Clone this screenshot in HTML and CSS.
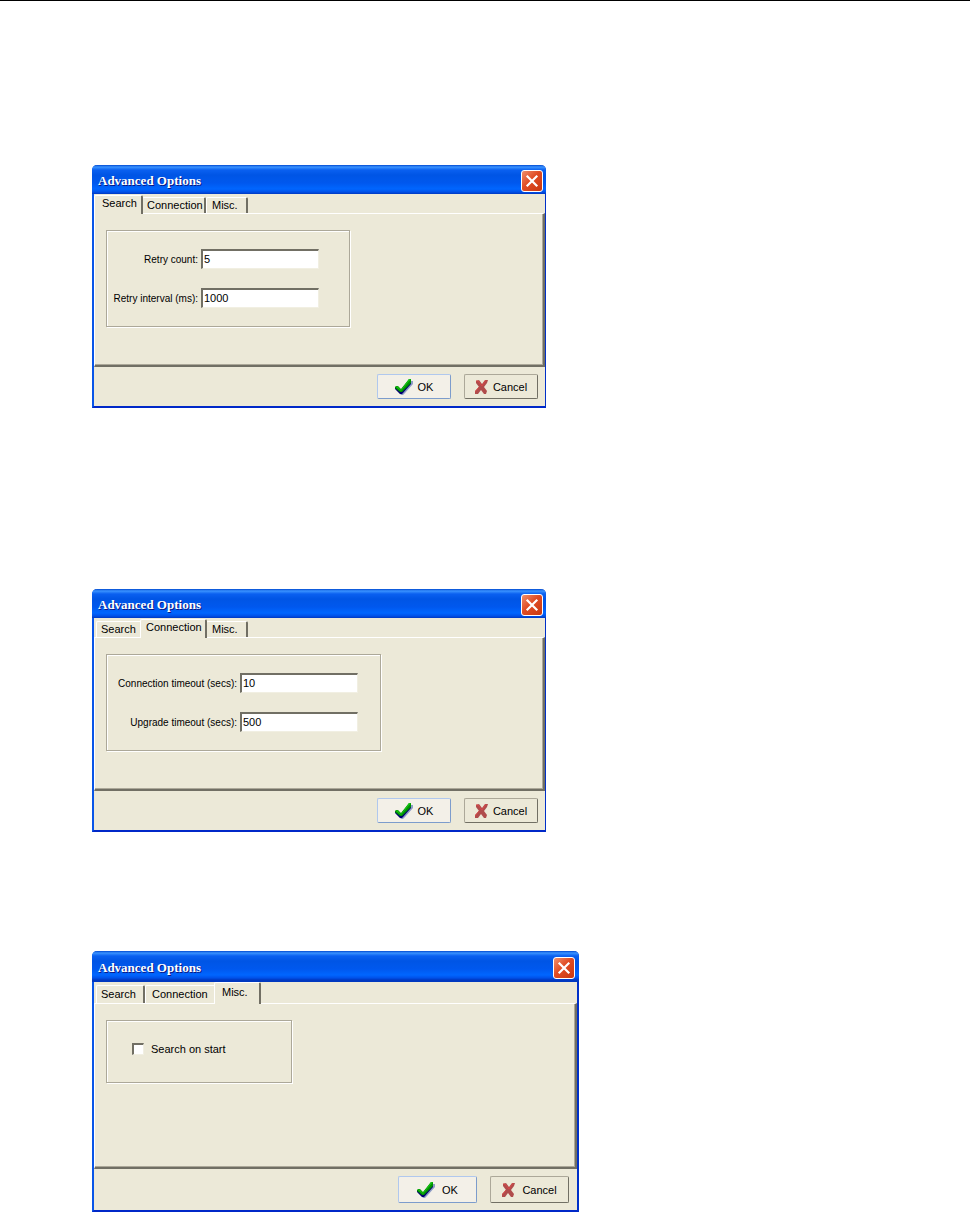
FILE: index.html
```html
<!DOCTYPE html>
<html lang="en">
<head>
    <meta charset="UTF-8">
    <meta name="viewport" content="width=device-width, initial-scale=1.0">
    <title>Advanced Options</title>
    <link rel="stylesheet" href="styles.css">
</head>
<body>
    <!-- Shared icons -->
    <svg class="sprite" aria-hidden="true">
        <symbol id="icon-close" viewBox="0 0 20 20">
            <path d="M5.5 5.5L14.5 14.5M14.5 5.5L5.5 14.5" fill="none" stroke="#fff" stroke-width="2.2" stroke-linecap="square"/>
        </symbol>
        <symbol id="icon-ok" viewBox="0 0 18 16">
            <path d="M3 10l4 2L15 2h3v3L10 14l-2 2H6l-3-4z" fill="#8f9dc6"/>
            <path d="M0 8h3l3 3L14 1h2v4L8 14l-1 1H5L0 10z" fill="#000070"/>
            <path d="M0 8l1-1h2l3 3L14 0h2v4L7 13H5L0 9z" fill="#009000"/>
            <path d="M1 8l1-1 4 4L14 0h2L6 12z" fill="#14c414"/>
        </symbol>
        <symbol id="icon-cancel" viewBox="0 0 13 15">
            <path d="M1 2l3-1 3 4 3-4 3 0-1 3-3 4 3 4-1 3h-2L6 11l-3 4H0v-3l4-4-3-4z" fill="#b04c4c"/>
            <path d="M1 2h2l4 5 4-6M4 8l-4 5" fill="none" stroke="#d84848" stroke-width="1"/>
        </symbol>
    </svg>

    <main>
        <section class="dialog">
            <header class="titlebar">
                <h2>Advanced Options</h2>
                <button class="close" type="button" aria-label="Close"><svg><use href="#icon-close"/></svg></button>
            </header>
            <div class="tabs" role="tablist">
                <button class="tab active" type="button" role="tab" aria-selected="true">Search</button>
                <button class="tab" type="button" role="tab">Connection</button>
                <button class="tab" type="button" role="tab">Misc.</button>
            </div>
            <div class="pane">
                <div class="group search-group">
                    <label for="retryCount">Retry count:</label>
                    <input type="text" id="retryCount" value="5">
                    <label for="retryInterval">Retry interval (ms):</label>
                    <input type="text" id="retryInterval" value="1000">
                </div>
            </div>
            <footer class="actions">
                <button class="btn ok" type="button"><svg class="check"><use href="#icon-ok"/></svg>OK</button>
                <button class="btn" type="button"><svg class="cross"><use href="#icon-cancel"/></svg>Cancel</button>
            </footer>
        </section>

        <section class="dialog second">
            <header class="titlebar">
                <h2>Advanced Options</h2>
                <button class="close" type="button" aria-label="Close"><svg><use href="#icon-close"/></svg></button>
            </header>
            <div class="tabs" role="tablist">
                <button class="tab" type="button" role="tab">Search</button>
                <button class="tab active" type="button" role="tab" aria-selected="true">Connection</button>
                <button class="tab" type="button" role="tab">Misc.</button>
            </div>
            <div class="pane">
                <div class="group connection-group">
                    <label for="connTimeout">Connection timeout (secs):</label>
                    <input type="text" id="connTimeout" value="10">
                    <label for="upgradeTimeout">Upgrade timeout (secs):</label>
                    <input type="text" id="upgradeTimeout" value="500">
                </div>
            </div>
            <footer class="actions">
                <button class="btn ok" type="button"><svg class="check"><use href="#icon-ok"/></svg>OK</button>
                <button class="btn" type="button"><svg class="cross"><use href="#icon-cancel"/></svg>Cancel</button>
            </footer>
        </section>

        <section class="dialog large">
            <header class="titlebar">
                <h2>Advanced Options</h2>
                <button class="close" type="button" aria-label="Close"><svg><use href="#icon-close"/></svg></button>
            </header>
            <div class="tabs" role="tablist">
                <button class="tab" type="button" role="tab">Search</button>
                <button class="tab" type="button" role="tab">Connection</button>
                <button class="tab active" type="button" role="tab" aria-selected="true">Misc.</button>
            </div>
            <div class="pane">
                <div class="group misc-group">
                    <input type="checkbox" id="searchOnStart">
                    <label for="searchOnStart">Search on start</label>
                </div>
            </div>
            <footer class="actions">
                <button class="btn ok" type="button"><svg class="check"><use href="#icon-ok"/></svg>OK</button>
                <button class="btn" type="button"><svg class="cross"><use href="#icon-cancel"/></svg>Cancel</button>
            </footer>
        </section>
    </main>
</body>
</html>
```
FILE: styles.css
```css
* {
    margin: 0;
    padding: 0;
    box-sizing: border-box;
}

body {
    background: #fff;
    color: #000;
    border-top: 1px solid #000;
}

body, button, input {
    font-family: "Liberation Sans", Arial, sans-serif;
    font-size: 11px;
}

button {
    color: #000;
}

.sprite {
    display: none;
}

main {
    padding: 164px 16px 0 92px;
}

.dialog {
    display: flex;
    flex-direction: column;
    width: 100%;
    max-width: 454px;
    background: #ece9d8;
    border: 2px solid #0855e8;
    border-top: none;
    border-right: 1px solid #0030c8;
    border-bottom-color: #0028c8;
    border-radius: 5px 5px 0 0;
    margin-bottom: 181px;
}

.dialog.second {
    margin-bottom: 119px;
}

.dialog.large {
    max-width: 487px;
    border-right-width: 2px;
    margin-bottom: 0;
}

/* Title bar */
.titlebar {
    display: flex;
    justify-content: space-between;
    align-items: center;
    height: 29px;
    margin: 0 -1px 0 -2px;
    padding: 2px 3px 0 6px;
    background: linear-gradient(#0048d0 0, #3a93ff 2px, #0a60f0 5px, #0055e5 10px, #0058ee 18px, #0066ff 24px, #0050e8 27px, #0038c0 29px);
    border-radius: 5px 5px 0 0;
}

.titlebar h2 {
    font-family: "Liberation Serif", "Times New Roman", serif;
    font-size: 13px;
    font-weight: bold;
    color: #fff;
    text-shadow: 1px 1px 0 #0a1883;
}

.close {
    width: 22px;
    height: 22px;
    background: linear-gradient(135deg, #f0906c, #e04c24 45%, #c83810);
    border: 1px solid #fff;
    border-radius: 3px;
}

.close svg {
    display: block;
    width: 20px;
    height: 20px;
}

/* Tabs */
.tabs {
    display: flex;
    align-items: flex-end;
    height: 19px;
    padding-left: 2px;
}

.tab {
    height: 16px;
    padding: 0 4px;
    background: #ece9d8;
    border: solid;
    border-width: 1px 2px 0 1px;
    border-color: #fff #716f64 #fff #fff;
    border-radius: 2px 2px 0 0;
    line-height: 15px;
    text-align: left;
    white-space: nowrap;
}

.tab:first-child {
    width: 46px;
}

.tab:nth-child(2) {
    width: 64px;
}

.tab:last-child {
    width: 42px;
    padding-left: 5px;
}

/* The selected tab covers the line under it */
.tab.active {
    height: 19px;
    margin: 0 -1px -1px -2px;
    padding: 0 5px 3px;
    position: relative;
}

.tab.active:first-child {
    width: 49px;
    padding-left: 7px;
}

.tab.active:nth-child(2) {
    width: 67px;
}

.pane {
    height: 154px;
    padding: 16px 11px;
    border: solid;
    border-width: 1px 2px 2px 1px;
    border-color: #fff #716f64 #716f64 #fff;
    box-shadow: inset -1px -1px 0 #aca899;
}

.group {
    border: 1px solid #aca899;
    box-shadow: inset 1px 1px 0 #fff, 1px 1px 0 #fff;
}

.search-group,
.connection-group {
    display: grid;
    grid-template-columns: 91px 118px;
    gap: 19px 3px;
    align-items: center;
    width: 244px;
    height: 97px;
    padding: 18px 0;
    align-content: start;
}

.connection-group {
    grid-template-columns: 130px 118px;
    width: 275px;
}

.search-group label,
.connection-group label {
    font-size: 10px;
    text-align: right;
    white-space: nowrap;
}

.group input[type="text"] {
    width: 100%;
    height: 20px;
    padding: 0 0 1px 1px;
    background: #fff;
    border: solid;
    border-width: 2px 1px 1px 2px;
    border-color: #716f64 #f1efe2 #f1efe2 #716f64;
}

.misc-group {
    display: flex;
    align-items: center;
    gap: 7px;
    width: 186px;
    height: 63px;
    padding: 0 0 6px 25px;
}

.misc-group input {
    appearance: none;
    width: 12px;
    height: 12px;
    background: #fff;
    border: solid;
    border-width: 2px 1px 1px 2px;
    border-color: #716f64 #f1efe2 #f1efe2 #716f64;
}

/* Bottom buttons */
.actions {
    display: flex;
    justify-content: flex-end;
    align-items: center;
    gap: 13px;
    height: 39px;
    padding-right: 7px;
}

.btn {
    display: flex;
    justify-content: center;
    align-items: center;
    gap: 5px;
    width: 74px;
    height: 25px;
    background: #ece9d8;
    border: 1px solid #716f64;
    border-top-color: #aca899;
    border-left-color: #aca899;
    border-radius: 2px;
}

.btn.ok {
    background: #f3f0e8;
    border-color: #b0c8ee #7c9ccc #7c9ccc #b0c8ee;
}

.check {
    width: 18px;
    height: 16px;
}

.cross {
    width: 13px;
    height: 15px;
}

/* Larger dialog */
.large .titlebar {
    height: 31px;
    margin-right: -2px;
    padding-right: 4px;
}

.large .tabs {
    height: 21px;
}

.large .tab {
    height: 18px;
    line-height: 17px;
}

.large .tab:first-child {
    width: 49px;
}

.large .tab:nth-child(2) {
    width: 71px;
    padding-left: 6px;
}

.large .tab.active {
    width: 47px;
    height: 22px;
    padding-left: 7px;
}

.large .pane {
    height: 166px;
}

.large .actions {
    height: 41px;
    padding-right: 8px;
}

.large .btn {
    width: 79px;
    height: 27px;
    gap: 7px;
}
```
